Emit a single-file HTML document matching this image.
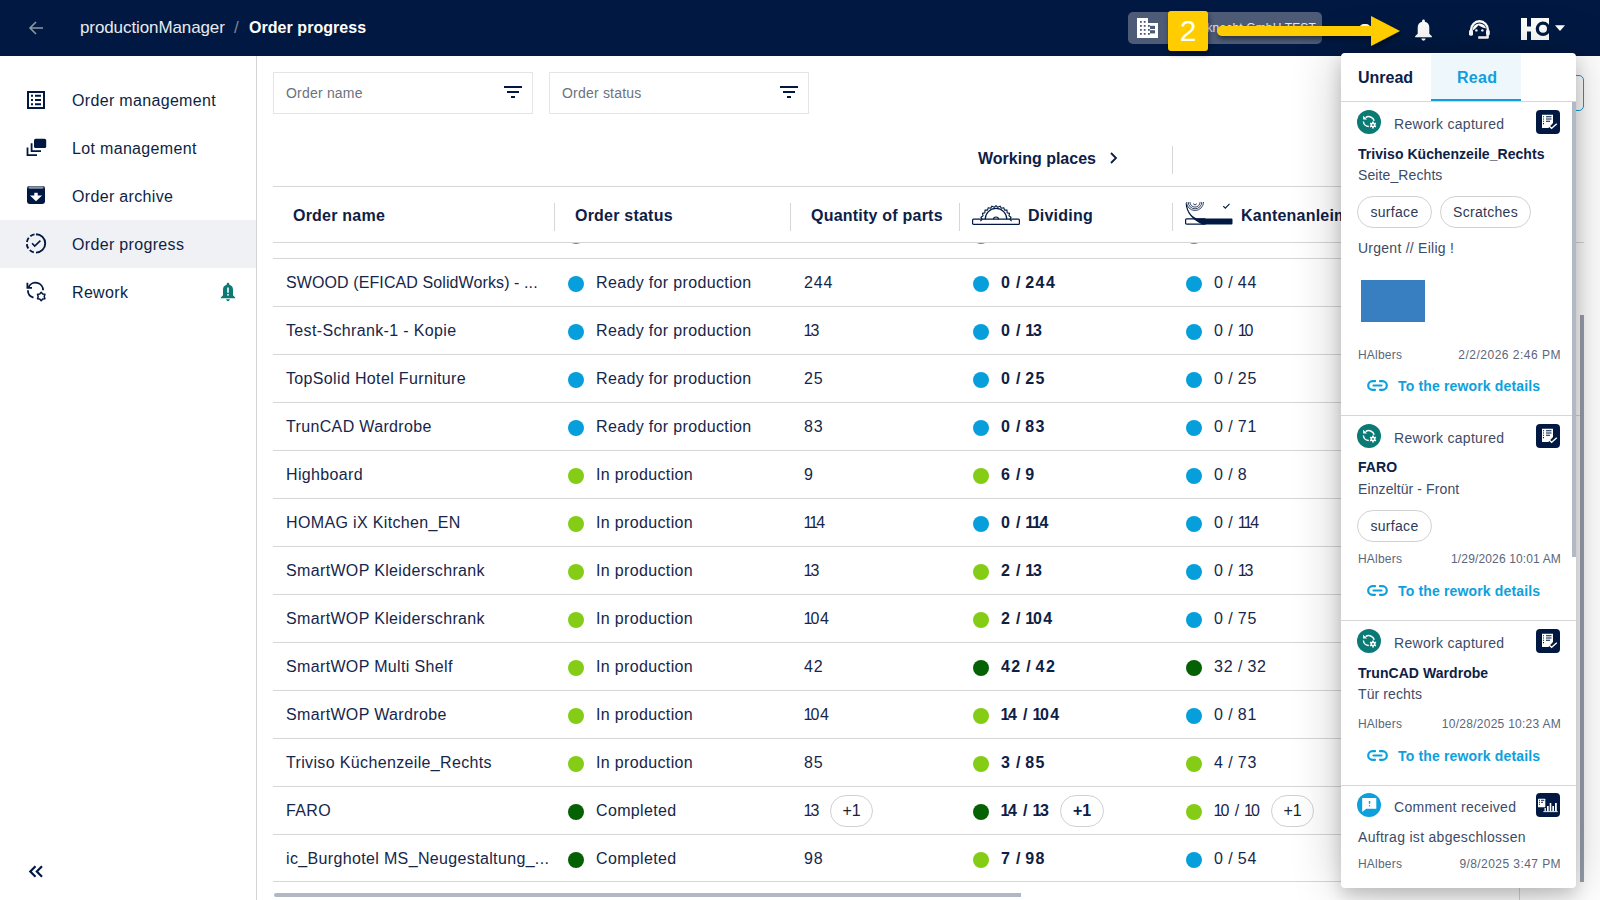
<!DOCTYPE html>
<html><head><meta charset="utf-8"><style>
*{box-sizing:border-box;margin:0;padding:0}
html,body{width:1600px;height:900px;overflow:hidden;background:#fff;font-family:"Liberation Sans",sans-serif;color:#0d1f3f}
.a{position:absolute}
#hdr{position:absolute;left:0;top:0;width:1600px;height:56px;background:#011942}
#side{position:absolute;left:0;top:56px;width:257px;height:844px;background:#fff;border-right:1px solid #d4d4d4}
.nav{position:absolute;left:0;width:256px;height:48px}
.nav svg{position:absolute;left:27px;top:15px}
.nav .tx{position:absolute;left:72px;top:1px;line-height:48px;font-size:16px;letter-spacing:0.33px;color:#0d1f44}
.nav.act{background:#f0f1f4}
.flt{position:absolute;top:72px;width:260px;height:42px;border:1px solid #e3e5e9;background:#fff}
.flt .ph{position:absolute;left:12px;top:0;line-height:41px;font-size:14px;color:#6b7280;letter-spacing:0.2px}
.flt svg{position:absolute;left:229px;top:13px}
.vs{position:absolute;width:1px;background:#d6d6d6}
.hl{position:absolute;height:1px;background:#d6d6d6}
.th{position:absolute;top:204px;font-size:16px;font-weight:bold;color:#0d2046;line-height:24px;letter-spacing:0.22px}
.cell{position:absolute;font-size:16px;color:#16264a;line-height:20px;letter-spacing:0.35px;white-space:nowrap}
.b{font-weight:bold;color:#0d2046;letter-spacing:0.2px}
.dot{position:absolute;width:16px;height:16px;border-radius:50%}
.chip{position:absolute;height:32px;border:1px solid #cfd1d5;border-radius:16px;font-size:16px;line-height:30px;text-align:center;color:#1b2435;background:#fff}
</style></head><body>
<div id="hdr">
  <svg class="a" style="left:28px;top:20px" width="16" height="16" viewBox="0 0 16 16"><path d="M15 8H2M8 2L2 8l6 6" fill="none" stroke="#8f96a3" stroke-width="1.6"/></svg>
  <div class="a" style="left:80px;top:18px;font-size:17px;letter-spacing:-0.1px;color:#e8eaee;line-height:20px">productionManager</div>
  <div class="a" style="left:234px;top:18px;font-size:17px;color:#7d8595;line-height:20px">/</div>
  <div class="a" style="left:249px;top:18px;font-size:16px;font-weight:bold;color:#fff;line-height:20px;letter-spacing:0.05px">Order progress</div>
<div class="a" style="left:1128px;top:12px;width:194px;height:32px;border-radius:5px;background:#4d5b77"></div>
<svg class="a" style="left:1137px;top:18px" width="21" height="20" viewBox="0 0 21 20"><path d="M0 0h11v5h10v15H0z" fill="#fff"/><g fill="#4d5b77"><rect x="3" y="3" width="1.8" height="1.8"/><rect x="6.8" y="3" width="1.8" height="1.8"/><rect x="3" y="7" width="1.8" height="1.8"/><rect x="6.8" y="7" width="1.8" height="1.8"/><rect x="3" y="11" width="1.8" height="1.8"/><rect x="6.8" y="11" width="1.8" height="1.8"/><rect x="3" y="15" width="1.8" height="1.8"/><rect x="6.8" y="15" width="1.8" height="1.8"/><rect x="11" y="7" width="1.8" height="1.8"/><rect x="11" y="11" width="1.8" height="1.8"/><rect x="11" y="15" width="1.8" height="1.8"/><rect x="13" y="7.8" width="5" height="3.2"/><rect x="13" y="12.2" width="5" height="3.2"/></g></svg>
<div class="a" style="left:1165px;top:19px;width:151px;height:18px;overflow:hidden"><div class="a" style="right:0;top:0;white-space:nowrap;font-size:12px;color:#e3e7ee;line-height:18px;letter-spacing:0.15px">Weinknecht GmbH TEST</div></div>
<div class="a" style="left:1359px;top:24px;width:12px;height:10px;border-radius:5px 5px 2px 2px;background:#fff"></div>
<svg class="a" style="left:1414px;top:19px" width="19" height="22" viewBox="0 0 19 22"><path d="M9.5 0.5a1.4 1.4 0 0 1 1.4 1.4v0.8A6 6 0 0 1 15.3 8.5v6.2l2.6 2.6v1H1.1v-1l2.6-2.6V8.5A6 6 0 0 1 8.1 2.7v-0.8A1.4 1.4 0 0 1 9.5 0.5z" fill="#fff"/><path d="M7.4 19.6h4.2a2.1 2.1 0 0 1-4.2 0z" fill="#fff"/></svg>
<svg class="a" style="left:1468px;top:19px" width="23" height="21" viewBox="0 0 23 21"><path d="M3.2 12V10.6A8.3 8.3 0 0 1 19.8 10.6V12" fill="none" stroke="#fff" stroke-width="2.4"/><rect x="1" y="11" width="4" height="5.7" rx="1.4" fill="#fff"/><rect x="18" y="11" width="3.8" height="5.5" rx="1.4" fill="#fff"/><path d="M4.4 12A7.1 7.1 0 0 1 18.6 11L18.2 9.4C15.5 9 12.6 7.9 10.4 6.3C8.8 8.4 6.8 10.4 4.6 11.5z" fill="#fff"/><circle cx="8.4" cy="11.4" r="1.2" fill="#fff"/><circle cx="14.4" cy="11.4" r="1.2" fill="#fff"/><path d="M19.6 16v2.4H10.2" fill="none" stroke="#fff" stroke-width="2.5" stroke-linejoin="round"/></svg>
<svg class="a" style="left:1521px;top:18px" width="45" height="23" viewBox="0 0 45 23"><path d="M0 0h6v8.5h4V0h18v22H10v-8.5H6V22H0z" fill="#fff"/><circle cx="22" cy="10.8" r="7.3" fill="#011942"/><circle cx="22" cy="10.8" r="4" fill="#fff"/><path d="M34 7.3h10l-5 5.7z" fill="#fff"/></svg>
</div>
<div id="side">
  <div class="nav" style="top:20px"><div class="tx">Order management</div></div>
  <div class="nav" style="top:68px"><div class="tx">Lot management</div></div>
  <div class="nav" style="top:116px"><div class="tx">Order archive</div></div>
  <div class="nav act" style="top:164px"><div class="tx">Order progress</div></div>
  <div class="nav" style="top:212px"><div class="tx">Rework</div></div>
</div>
<svg class="a" style="left:27px;top:91px" width="18" height="18" viewBox="0 0 18 18"><rect x="1" y="1" width="16" height="16" fill="none" stroke="#011942" stroke-width="2"/><path d="M4 4.8h2M8 4.8h6M4 9h2M8 9h6M4 13.2h2M8 13.2h6" stroke="#011942" stroke-width="2"/></svg>
<svg class="a" style="left:26px;top:138px" width="21" height="19" viewBox="0 0 21 19"><rect x="8" y="0.8" width="12.2" height="9.2" rx="1.6" fill="#011942"/><path d="M5.6 5.2V13.1H15" fill="none" stroke="#011942" stroke-width="1.8"/><path d="M1.5 9.6V17.1H11" fill="none" stroke="#011942" stroke-width="1.8"/></svg>
<svg class="a" style="left:27px;top:186px" width="18" height="18" viewBox="0 0 18 18"><rect x="0" y="0" width="18" height="18" rx="2.4" fill="#011942"/><rect x="1.5" y="0.3" width="15" height="2.4" rx="1" fill="#8d94a2"/><rect x="7.3" y="6.8" width="3.4" height="3.2" fill="#fff"/><path d="M3 9.4h12L9 15.2z" fill="#fff"/></svg>
<svg class="a" style="left:26px;top:233px" width="21" height="21" viewBox="0 0 21 21"><path d="M10 1.2A9.2 9.2 0 0 1 10 19.6" fill="none" stroke="#011942" stroke-width="1.9"/><path d="M10 19.6A9.2 9.2 0 0 1 10 1.2" fill="none" stroke="#011942" stroke-width="1.9" stroke-dasharray="4.6 2.2" stroke-dashoffset="4.6"/><path d="M6.1 10.2L8.7 13.1 14.4 7.6" fill="none" stroke="#011942" stroke-width="1.6"/></svg>
<svg class="a" style="left:26px;top:281px" width="21" height="21" viewBox="0 0 21 21"><path d="M2.6 6.1A7.6 7.6 0 0 1 17.1 9.3" fill="none" stroke="#011942" stroke-width="1.8"/><path d="M1.9 9.3A7.6 7.6 0 0 0 7.5 16.6" fill="none" stroke="#011942" stroke-width="1.8"/><path d="M1.4 1.8V6.8H6" fill="none" stroke="#011942" stroke-width="1.8"/><path d="M15.20 11.20 L16.70 12.90 L18.92 13.35 L18.20 15.50 L18.92 17.65 L16.70 18.10 L15.20 19.80 L13.70 18.10 L11.48 17.65 L12.20 15.50 L11.48 13.35 L13.70 12.90z" fill="none" stroke="#011942" stroke-width="1.5" stroke-linejoin="round"/></svg>
<svg class="a" style="left:220px;top:282px" width="16" height="19" viewBox="0 0 16 19"><path d="M8 0.8a1.3 1.3 0 0 1 1.3 1.3v0.6A5.2 5.2 0 0 1 13 7.8v5.4l2.2 2.2v0.9H0.8v-0.9L3 13.2V7.8a5.2 5.2 0 0 1 3.7-5.1V2.1A1.3 1.3 0 0 1 8 0.8z" fill="#0b7a75"/><path d="M6.2 17.3h3.6a1.8 1.8 0 0 1-3.6 0z" fill="#0b7a75"/><rect x="7.2" y="5.5" width="1.6" height="5.3" fill="#fff"/><rect x="7.2" y="12" width="1.6" height="1.6" fill="#fff"/></svg>
<svg class="a" style="left:28px;top:865px" width="16" height="13" viewBox="0 0 16 13"><path d="M7.5 1.2L2.3 6.5l5.2 5.3M14 1.2L8.8 6.5l5.2 5.3" fill="none" stroke="#011942" stroke-width="2.2"/></svg>
<div id="main">
<div class="dot" style="left:568px;top:228px;background:#069fdb"></div>
<div class="cell" style="left:596px;top:225px">Ready for production</div>
<div class="dot" style="left:973px;top:228px;background:#069fdb"></div>
<div class="dot" style="left:1186px;top:228px;background:#069fdb"></div>
<div class="hl" style="left:273px;top:258px;width:1303px"></div>
<div class="cell" style="left:286px;top:273px;letter-spacing:0.1px">SWOOD (EFICAD SolidWorks) - ...</div>
<div class="dot" style="left:568px;top:276px;background:#069fdb"></div>
<div class="cell" style="left:596px;top:273px">Ready for production</div>
<div class="cell" style="left:804px;top:273px"><span style="letter-spacing:0.8px">2</span><span style="letter-spacing:0.8px">4</span><span style="letter-spacing:0.8px">4</span></div>
<div class="dot" style="left:973px;top:276px;background:#069fdb"></div>
<div class="cell b" style="left:1001px;top:273px"><span style="letter-spacing:1.4px">0</span><span style="letter-spacing:0.2px"> </span><span style="letter-spacing:0.2px">/</span><span style="letter-spacing:0.2px"> </span><span style="letter-spacing:1.4px">2</span><span style="letter-spacing:1.4px">4</span><span style="letter-spacing:1.4px">4</span></div>
<div class="dot" style="left:1186px;top:276px;background:#069fdb"></div>
<div class="cell" style="left:1214px;top:273px"><span style="letter-spacing:0.8px">0</span><span style="letter-spacing:0.2px"> </span><span style="letter-spacing:0.2px">/</span><span style="letter-spacing:0.2px"> </span><span style="letter-spacing:0.8px">4</span><span style="letter-spacing:0.8px">4</span></div>
<div class="hl" style="left:273px;top:306px;width:1303px"></div>
<div class="cell" style="left:286px;top:321px;letter-spacing:0.35px">Test-Schrank-1 - Kopie</div>
<div class="dot" style="left:568px;top:324px;background:#069fdb"></div>
<div class="cell" style="left:596px;top:321px">Ready for production</div>
<div class="cell" style="left:804px;top:321px"><span style="letter-spacing:-2.0px;margin-left:-0.5px">1</span><span style="letter-spacing:0.8px">3</span></div>
<div class="dot" style="left:973px;top:324px;background:#069fdb"></div>
<div class="cell b" style="left:1001px;top:321px"><span style="letter-spacing:1.4px">0</span><span style="letter-spacing:0.2px"> </span><span style="letter-spacing:0.2px">/</span><span style="letter-spacing:0.2px"> </span><span style="letter-spacing:-1.3px">1</span><span style="letter-spacing:1.4px">3</span></div>
<div class="dot" style="left:1186px;top:324px;background:#069fdb"></div>
<div class="cell" style="left:1214px;top:321px"><span style="letter-spacing:0.8px">0</span><span style="letter-spacing:0.2px"> </span><span style="letter-spacing:0.2px">/</span><span style="letter-spacing:0.2px"> </span><span style="letter-spacing:-2.0px">1</span><span style="letter-spacing:0.8px">0</span></div>
<div class="hl" style="left:273px;top:354px;width:1303px"></div>
<div class="cell" style="left:286px;top:369px;letter-spacing:0.35px">TopSolid Hotel Furniture</div>
<div class="dot" style="left:568px;top:372px;background:#069fdb"></div>
<div class="cell" style="left:596px;top:369px">Ready for production</div>
<div class="cell" style="left:804px;top:369px"><span style="letter-spacing:0.8px">2</span><span style="letter-spacing:0.8px">5</span></div>
<div class="dot" style="left:973px;top:372px;background:#069fdb"></div>
<div class="cell b" style="left:1001px;top:369px"><span style="letter-spacing:1.4px">0</span><span style="letter-spacing:0.2px"> </span><span style="letter-spacing:0.2px">/</span><span style="letter-spacing:0.2px"> </span><span style="letter-spacing:1.4px">2</span><span style="letter-spacing:1.4px">5</span></div>
<div class="dot" style="left:1186px;top:372px;background:#069fdb"></div>
<div class="cell" style="left:1214px;top:369px"><span style="letter-spacing:0.8px">0</span><span style="letter-spacing:0.2px"> </span><span style="letter-spacing:0.2px">/</span><span style="letter-spacing:0.2px"> </span><span style="letter-spacing:0.8px">2</span><span style="letter-spacing:0.8px">5</span></div>
<div class="hl" style="left:273px;top:402px;width:1303px"></div>
<div class="cell" style="left:286px;top:417px;letter-spacing:0.35px">TrunCAD Wardrobe</div>
<div class="dot" style="left:568px;top:420px;background:#069fdb"></div>
<div class="cell" style="left:596px;top:417px">Ready for production</div>
<div class="cell" style="left:804px;top:417px"><span style="letter-spacing:0.8px">8</span><span style="letter-spacing:0.8px">3</span></div>
<div class="dot" style="left:973px;top:420px;background:#069fdb"></div>
<div class="cell b" style="left:1001px;top:417px"><span style="letter-spacing:1.4px">0</span><span style="letter-spacing:0.2px"> </span><span style="letter-spacing:0.2px">/</span><span style="letter-spacing:0.2px"> </span><span style="letter-spacing:1.4px">8</span><span style="letter-spacing:1.4px">3</span></div>
<div class="dot" style="left:1186px;top:420px;background:#069fdb"></div>
<div class="cell" style="left:1214px;top:417px"><span style="letter-spacing:0.8px">0</span><span style="letter-spacing:0.2px"> </span><span style="letter-spacing:0.2px">/</span><span style="letter-spacing:0.2px"> </span><span style="letter-spacing:0.8px">7</span><span style="letter-spacing:-2.0px">1</span></div>
<div class="hl" style="left:273px;top:450px;width:1303px"></div>
<div class="cell" style="left:286px;top:465px;letter-spacing:0.35px">Highboard</div>
<div class="dot" style="left:568px;top:468px;background:#84cc16"></div>
<div class="cell" style="left:596px;top:465px">In production</div>
<div class="cell" style="left:804px;top:465px"><span style="letter-spacing:0.8px">9</span></div>
<div class="dot" style="left:973px;top:468px;background:#84cc16"></div>
<div class="cell b" style="left:1001px;top:465px"><span style="letter-spacing:1.4px">6</span><span style="letter-spacing:0.2px"> </span><span style="letter-spacing:0.2px">/</span><span style="letter-spacing:0.2px"> </span><span style="letter-spacing:1.4px">9</span></div>
<div class="dot" style="left:1186px;top:468px;background:#069fdb"></div>
<div class="cell" style="left:1214px;top:465px"><span style="letter-spacing:0.8px">0</span><span style="letter-spacing:0.2px"> </span><span style="letter-spacing:0.2px">/</span><span style="letter-spacing:0.2px"> </span><span style="letter-spacing:0.8px">8</span></div>
<div class="hl" style="left:273px;top:498px;width:1303px"></div>
<div class="cell" style="left:286px;top:513px;letter-spacing:0.35px">HOMAG iX Kitchen_EN</div>
<div class="dot" style="left:568px;top:516px;background:#84cc16"></div>
<div class="cell" style="left:596px;top:513px">In production</div>
<div class="cell" style="left:804px;top:513px"><span style="letter-spacing:-2.0px;margin-left:-0.5px">1</span><span style="letter-spacing:-2.0px">1</span><span style="letter-spacing:0.8px">4</span></div>
<div class="dot" style="left:973px;top:516px;background:#069fdb"></div>
<div class="cell b" style="left:1001px;top:513px"><span style="letter-spacing:1.4px">0</span><span style="letter-spacing:0.2px"> </span><span style="letter-spacing:0.2px">/</span><span style="letter-spacing:0.2px"> </span><span style="letter-spacing:-1.3px">1</span><span style="letter-spacing:-1.3px">1</span><span style="letter-spacing:1.4px">4</span></div>
<div class="dot" style="left:1186px;top:516px;background:#069fdb"></div>
<div class="cell" style="left:1214px;top:513px"><span style="letter-spacing:0.8px">0</span><span style="letter-spacing:0.2px"> </span><span style="letter-spacing:0.2px">/</span><span style="letter-spacing:0.2px"> </span><span style="letter-spacing:-2.0px">1</span><span style="letter-spacing:-2.0px">1</span><span style="letter-spacing:0.8px">4</span></div>
<div class="hl" style="left:273px;top:546px;width:1303px"></div>
<div class="cell" style="left:286px;top:561px;letter-spacing:0.35px">SmartWOP Kleiderschrank</div>
<div class="dot" style="left:568px;top:564px;background:#84cc16"></div>
<div class="cell" style="left:596px;top:561px">In production</div>
<div class="cell" style="left:804px;top:561px"><span style="letter-spacing:-2.0px;margin-left:-0.5px">1</span><span style="letter-spacing:0.8px">3</span></div>
<div class="dot" style="left:973px;top:564px;background:#84cc16"></div>
<div class="cell b" style="left:1001px;top:561px"><span style="letter-spacing:1.4px">2</span><span style="letter-spacing:0.2px"> </span><span style="letter-spacing:0.2px">/</span><span style="letter-spacing:0.2px"> </span><span style="letter-spacing:-1.3px">1</span><span style="letter-spacing:1.4px">3</span></div>
<div class="dot" style="left:1186px;top:564px;background:#069fdb"></div>
<div class="cell" style="left:1214px;top:561px"><span style="letter-spacing:0.8px">0</span><span style="letter-spacing:0.2px"> </span><span style="letter-spacing:0.2px">/</span><span style="letter-spacing:0.2px"> </span><span style="letter-spacing:-2.0px">1</span><span style="letter-spacing:0.8px">3</span></div>
<div class="hl" style="left:273px;top:594px;width:1303px"></div>
<div class="cell" style="left:286px;top:609px;letter-spacing:0.35px">SmartWOP Kleiderschrank</div>
<div class="dot" style="left:568px;top:612px;background:#84cc16"></div>
<div class="cell" style="left:596px;top:609px">In production</div>
<div class="cell" style="left:804px;top:609px"><span style="letter-spacing:-2.0px;margin-left:-0.5px">1</span><span style="letter-spacing:0.8px">0</span><span style="letter-spacing:0.8px">4</span></div>
<div class="dot" style="left:973px;top:612px;background:#84cc16"></div>
<div class="cell b" style="left:1001px;top:609px"><span style="letter-spacing:1.4px">2</span><span style="letter-spacing:0.2px"> </span><span style="letter-spacing:0.2px">/</span><span style="letter-spacing:0.2px"> </span><span style="letter-spacing:-1.3px">1</span><span style="letter-spacing:1.4px">0</span><span style="letter-spacing:1.4px">4</span></div>
<div class="dot" style="left:1186px;top:612px;background:#069fdb"></div>
<div class="cell" style="left:1214px;top:609px"><span style="letter-spacing:0.8px">0</span><span style="letter-spacing:0.2px"> </span><span style="letter-spacing:0.2px">/</span><span style="letter-spacing:0.2px"> </span><span style="letter-spacing:0.8px">7</span><span style="letter-spacing:0.8px">5</span></div>
<div class="hl" style="left:273px;top:642px;width:1303px"></div>
<div class="cell" style="left:286px;top:657px;letter-spacing:0.35px">SmartWOP Multi Shelf</div>
<div class="dot" style="left:568px;top:660px;background:#84cc16"></div>
<div class="cell" style="left:596px;top:657px">In production</div>
<div class="cell" style="left:804px;top:657px"><span style="letter-spacing:0.8px">4</span><span style="letter-spacing:0.8px">2</span></div>
<div class="dot" style="left:973px;top:660px;background:#046104"></div>
<div class="cell b" style="left:1001px;top:657px"><span style="letter-spacing:1.4px">4</span><span style="letter-spacing:1.4px">2</span><span style="letter-spacing:0.2px"> </span><span style="letter-spacing:0.2px">/</span><span style="letter-spacing:0.2px"> </span><span style="letter-spacing:1.4px">4</span><span style="letter-spacing:1.4px">2</span></div>
<div class="dot" style="left:1186px;top:660px;background:#046104"></div>
<div class="cell" style="left:1214px;top:657px"><span style="letter-spacing:0.8px">3</span><span style="letter-spacing:0.8px">2</span><span style="letter-spacing:0.2px"> </span><span style="letter-spacing:0.2px">/</span><span style="letter-spacing:0.2px"> </span><span style="letter-spacing:0.8px">3</span><span style="letter-spacing:0.8px">2</span></div>
<div class="hl" style="left:273px;top:690px;width:1303px"></div>
<div class="cell" style="left:286px;top:705px;letter-spacing:0.35px">SmartWOP Wardrobe</div>
<div class="dot" style="left:568px;top:708px;background:#84cc16"></div>
<div class="cell" style="left:596px;top:705px">In production</div>
<div class="cell" style="left:804px;top:705px"><span style="letter-spacing:-2.0px;margin-left:-0.5px">1</span><span style="letter-spacing:0.8px">0</span><span style="letter-spacing:0.8px">4</span></div>
<div class="dot" style="left:973px;top:708px;background:#84cc16"></div>
<div class="cell b" style="left:1001px;top:705px"><span style="letter-spacing:-1.3px;margin-left:-0.5px">1</span><span style="letter-spacing:1.4px">4</span><span style="letter-spacing:0.2px"> </span><span style="letter-spacing:0.2px">/</span><span style="letter-spacing:0.2px"> </span><span style="letter-spacing:-1.3px">1</span><span style="letter-spacing:1.4px">0</span><span style="letter-spacing:1.4px">4</span></div>
<div class="dot" style="left:1186px;top:708px;background:#069fdb"></div>
<div class="cell" style="left:1214px;top:705px"><span style="letter-spacing:0.8px">0</span><span style="letter-spacing:0.2px"> </span><span style="letter-spacing:0.2px">/</span><span style="letter-spacing:0.2px"> </span><span style="letter-spacing:0.8px">8</span><span style="letter-spacing:-2.0px">1</span></div>
<div class="hl" style="left:273px;top:738px;width:1303px"></div>
<div class="cell" style="left:286px;top:753px;letter-spacing:0.35px">Triviso Küchenzeile_Rechts</div>
<div class="dot" style="left:568px;top:756px;background:#84cc16"></div>
<div class="cell" style="left:596px;top:753px">In production</div>
<div class="cell" style="left:804px;top:753px"><span style="letter-spacing:0.8px">8</span><span style="letter-spacing:0.8px">5</span></div>
<div class="dot" style="left:973px;top:756px;background:#84cc16"></div>
<div class="cell b" style="left:1001px;top:753px"><span style="letter-spacing:1.4px">3</span><span style="letter-spacing:0.2px"> </span><span style="letter-spacing:0.2px">/</span><span style="letter-spacing:0.2px"> </span><span style="letter-spacing:1.4px">8</span><span style="letter-spacing:1.4px">5</span></div>
<div class="dot" style="left:1186px;top:756px;background:#84cc16"></div>
<div class="cell" style="left:1214px;top:753px"><span style="letter-spacing:0.8px">4</span><span style="letter-spacing:0.2px"> </span><span style="letter-spacing:0.2px">/</span><span style="letter-spacing:0.2px"> </span><span style="letter-spacing:0.8px">7</span><span style="letter-spacing:0.8px">3</span></div>
<div class="hl" style="left:273px;top:786px;width:1303px"></div>
<div class="cell" style="left:286px;top:801px;letter-spacing:0.35px">FARO</div>
<div class="dot" style="left:568px;top:804px;background:#046104"></div>
<div class="cell" style="left:596px;top:801px">Completed</div>
<div class="cell" style="left:804px;top:801px"><span style="letter-spacing:-2.0px;margin-left:-0.5px">1</span><span style="letter-spacing:0.8px">3</span></div>
<div class="dot" style="left:973px;top:804px;background:#046104"></div>
<div class="cell b" style="left:1001px;top:801px"><span style="letter-spacing:-1.3px;margin-left:-0.5px">1</span><span style="letter-spacing:1.4px">4</span><span style="letter-spacing:0.2px"> </span><span style="letter-spacing:0.2px">/</span><span style="letter-spacing:0.2px"> </span><span style="letter-spacing:-1.3px">1</span><span style="letter-spacing:1.4px">3</span></div>
<div class="dot" style="left:1186px;top:804px;background:#84cc16"></div>
<div class="cell" style="left:1214px;top:801px"><span style="letter-spacing:-2.0px;margin-left:-0.5px">1</span><span style="letter-spacing:0.8px">0</span><span style="letter-spacing:0.2px"> </span><span style="letter-spacing:0.2px">/</span><span style="letter-spacing:0.2px"> </span><span style="letter-spacing:-2.0px">1</span><span style="letter-spacing:0.8px">0</span></div>
<div class="chip" style="left:830px;top:795px;width:43px">+1</div>
<div class="chip" style="left:1060px;top:795px;width:44px;font-weight:bold;color:#0d2046">+1</div>
<div class="chip" style="left:1271px;top:795px;width:43px">+1</div>
<div class="hl" style="left:273px;top:834px;width:1303px"></div>
<div class="cell" style="left:286px;top:849px;letter-spacing:0.35px">ic_Burghotel MS_Neugestaltung_...</div>
<div class="dot" style="left:568px;top:852px;background:#046104"></div>
<div class="cell" style="left:596px;top:849px">Completed</div>
<div class="cell" style="left:804px;top:849px"><span style="letter-spacing:0.8px">9</span><span style="letter-spacing:0.8px">8</span></div>
<div class="dot" style="left:973px;top:852px;background:#84cc16"></div>
<div class="cell b" style="left:1001px;top:849px"><span style="letter-spacing:1.4px">7</span><span style="letter-spacing:0.2px"> </span><span style="letter-spacing:0.2px">/</span><span style="letter-spacing:0.2px"> </span><span style="letter-spacing:1.4px">9</span><span style="letter-spacing:1.4px">8</span></div>
<div class="dot" style="left:1186px;top:852px;background:#069fdb"></div>
<div class="cell" style="left:1214px;top:849px"><span style="letter-spacing:0.8px">0</span><span style="letter-spacing:0.2px"> </span><span style="letter-spacing:0.2px">/</span><span style="letter-spacing:0.2px"> </span><span style="letter-spacing:0.8px">5</span><span style="letter-spacing:0.8px">4</span></div>
<div class="hl" style="left:273px;top:881px;width:1303px"></div>
  <div class="a" style="left:273px;top:57px;width:1070px;height:185px;background:#fff"></div>
  <div class="flt" style="left:273px"><div class="ph">Order name</div><svg width="20" height="14" viewBox="0 0 20 14"><path d="M1 1h18M4 6h12M8 11h4" stroke="#011942" stroke-width="2"/></svg></div>
  <div class="flt" style="left:549px"><div class="ph">Order status</div><svg width="20" height="14" viewBox="0 0 20 14"><path d="M1 1h18M4 6h12M8 11h4" stroke="#011942" stroke-width="2"/></svg></div>
  <div class="a" style="left:978px;top:149px;font-size:16px;font-weight:bold;color:#0d2046;line-height:20px">Working places</div>
  <svg class="a" style="left:1109px;top:152px" width="10" height="12" viewBox="0 0 10 12"><path d="M2 1l5 5-5 5" fill="none" stroke="#0b1d3f" stroke-width="1.8"/></svg>
  <div class="vs" style="left:1172px;top:146px;height:28px"></div>
  <div class="hl" style="left:273px;top:186px;width:1303px"></div>
  <div class="hl" style="left:273px;top:242px;width:1311px"></div>
  <div class="th" style="left:293px">Order name</div>
  <div class="vs" style="left:554px;top:203px;height:28px"></div>
  <div class="th" style="left:575px">Order status</div>
  <div class="vs" style="left:790px;top:203px;height:28px"></div>
  <div class="th" style="left:811px">Quantity of parts</div>
  <div class="vs" style="left:959px;top:203px;height:28px"></div>
  <div class="th" style="left:1028px">Dividing</div>
<svg class="a" style="left:972px;top:204px" width="48" height="21" viewBox="0 0 48 21"><rect x="0.6" y="15.2" width="46.8" height="5.2" rx="1" fill="#fff" stroke="#011942" stroke-width="1.2"/><path d="M8.40 17.20 L10.12 15.37 L8.93 13.16 L11.07 11.84 L10.49 9.40 L12.89 8.68 L12.97 6.17 L15.48 6.09 L16.20 3.69 L18.64 4.27 L19.96 2.13 L22.17 3.32 L24.00 1.60 L25.83 3.32 L28.04 2.13 L29.36 4.27 L31.80 3.69 L32.52 6.09 L35.03 6.17 L35.11 8.68 L37.51 9.40 L36.93 11.84 L39.07 13.16 L37.88 15.37 L39.60 17.20" fill="none" stroke="#011942" stroke-width="1.1" stroke-linejoin="round"/><path d="M13.2 15.2A10.8 10.8 0 0 1 34.8 15.2" fill="none" stroke="#011942" stroke-width="1.2"/><path d="M21.5 15.2a2.5 2.2 0 0 1 5 0" fill="none" stroke="#011942" stroke-width="1.1"/></svg>
<svg class="a" style="left:1185px;top:202px" width="49" height="23" viewBox="0 0 49 23"><rect x="0.6" y="16.8" width="20" height="5.4" rx="1" fill="none" stroke="#011942" stroke-width="1.2"/><path d="M0.6 1C1 11 8 18.5 17.5 22.4H46.5a1 1 0 0 0 1-1V17.6a1 1 0 0 0-1-1H12C6 14 2.6 9 2.2 3z" fill="#011942"/><g fill="none" stroke="#011942" stroke-width="0.8"><path d="M1.5 0a8.5 8.5 0 0 0 17 0"/><path d="M3.2 0a6.8 6.8 0 0 0 13.6 0"/><path d="M4.9 0a5.1 5.1 0 0 0 10.2 0"/><path d="M8.5 1.5a1.5 1.3 0 0 0 3 0"/></g><path d="M38.3 4.2l2 2 4.2-4.4" fill="none" stroke="#011942" stroke-width="1.1"/></svg>
  <div class="vs" style="left:1172px;top:203px;height:28px"></div>
  <div class="th" style="left:1241px">Kantenanleimen</div>
  <div class="a" style="left:274px;top:893px;width:747px;height:4px;border-radius:3px 0 0 3px;background:#b1b8c5"></div>
</div>
<div class="a" style="left:1500px;top:75px;width:84px;height:36px;border:1.5px solid #0ea0dc;border-radius:5px"></div>
<div class="a" style="left:1519px;top:870px;width:1px;height:30px;background:#d6d6d6"></div>
<div class="hl" style="left:1576px;top:415px;width:8px"></div>
<div class="a" style="left:1580px;top:315px;width:4px;height:567px;background:#9aa1ae"></div>
<div id="pop" class="a" style="left:1341px;top:53px;width:235px;height:835px;background:#fff;border-radius:4px;box-shadow:0 8px 16px rgba(0,0,0,0.16),0 0 50px rgba(0,0,0,0.24);overflow:hidden">
<div class="a" style="left:90px;top:1px;width:90px;height:47px;background:#eef7fc"></div>
<div class="a" style="left:90px;top:46px;width:90px;height:2px;background:#0ea0dc"></div>
<div class="a" style="left:0;top:48px;width:235px;height:1px;background:#d5d7db"></div>
<div class="a" style="left:17px;top:15px;font-size:16px;font-weight:bold;color:#0d2046;line-height:20px">Unread</div>
<div class="a" style="left:116px;top:15px;font-size:16px;font-weight:bold;color:#0ea0dc;line-height:20px;letter-spacing:0.3px">Read</div>
</div>
<div class="a" style="left:1357px;top:110px;width:24px;height:24px;border-radius:50%;background:#0b7a75"></div>
<svg class="a" style="left:1357px;top:110px" width="24" height="24" viewBox="0 0 24 24"><path d="M8.6 7.6A5.6 5.6 0 0 1 17.2 10.8" fill="none" stroke="#fff" stroke-width="1.5"/><path d="M6.1 5.8V9.4H10z" fill="#fff"/><path d="M6.4 11.5A5.6 5.6 0 0 0 11.8 16.6" fill="none" stroke="#fff" stroke-width="1.5"/><g transform="translate(16 15)"><circle r="2.4" fill="#fff"/><path d="M0-3.4V3.4M-2.9-1.7L2.9 1.7M-2.9 1.7L2.9-1.7" stroke="#fff" stroke-width="1.6"/><circle r="0.9" fill="#0b7a75"/></g></svg>
<div class="a" style="left:1394px;top:115px;font-size:14px;color:#3d4b67;line-height:18px;letter-spacing:0.3px">Rework captured</div>
<div class="a" style="left:1536px;top:110px;width:24px;height:24px;border-radius:4px;background:#011942"></div>
<svg class="a" style="left:1536px;top:110px" width="24" height="24" viewBox="0 0 24 24"><path d="M6 4.8h11v8.2l-4.6 5H6z" fill="#fff"/><path d="M7 6.8h1M10 6.8h5.5M7 9h1M10 9h5.5M7 11.3h1M10 11.3h4M7 13.6h1" stroke="#011942" stroke-width="1.1"/><path d="M13.2 16l2.4 2.3 5.2-4.6" fill="none" stroke="#fff" stroke-width="1.3"/></svg>
<div class="a" style="left:1358px;top:145px;font-size:14px;font-weight:bold;color:#0d2046;line-height:18px;letter-spacing:0.05px">Triviso Küchenzeile_Rechts</div>
<div class="a" style="left:1358px;top:166px;font-size:14px;color:#3d4b67;line-height:18px;letter-spacing:0.1px">Seite_Rechts</div>
<div class="a" style="left:1357px;top:196px;width:75px;height:32px;border:1px solid #d2d2d2;border-radius:16px;font-size:14px;color:#2d3a55;line-height:30px;text-align:center;letter-spacing:0.3px">surface</div>
<div class="a" style="left:1440px;top:196px;width:91px;height:32px;border:1px solid #d2d2d2;border-radius:16px;font-size:14px;color:#2d3a55;line-height:30px;text-align:center;letter-spacing:0.3px">Scratches</div>
<div class="a" style="left:1358px;top:239px;font-size:14px;color:#3d4b67;line-height:18px;letter-spacing:0.25px">Urgent // Eilig !</div>
<div class="a" style="left:1361px;top:280px;width:64px;height:42px;background:#377fc0"></div>
<div class="a" style="left:1358px;top:348px;font-size:12px;color:#5b667b;line-height:14px;letter-spacing:0.2px">HAlbers</div>
<div class="a" style="left:1361px;top:348px;width:200px;text-align:right;font-size:12px;color:#5b667b;line-height:14px;letter-spacing:0.5px;margin-right:0">2/2/2026 2:46 PM</div>
<svg class="a" style="left:1367px;top:380px" width="21" height="11" viewBox="0 0 21 11"><path d="M8 1.2H5.5a4.3 4.3 0 0 0 0 8.6H8M13 1.2h2.5a4.3 4.3 0 0 1 0 8.6H13M6.5 5.5h8" fill="none" stroke="#0ea0dc" stroke-width="2.2" stroke-linecap="round"/></svg>
<div class="a" style="left:1398px;top:377px;font-size:14px;font-weight:bold;color:#0ea0dc;line-height:18px;letter-spacing:0.15px">To the rework details</div>
<div class="a" style="left:1341px;top:415px;width:235px;height:1px;background:#d6d6d6"></div>
<div class="a" style="left:1357px;top:424px;width:24px;height:24px;border-radius:50%;background:#0b7a75"></div>
<svg class="a" style="left:1357px;top:424px" width="24" height="24" viewBox="0 0 24 24"><path d="M8.6 7.6A5.6 5.6 0 0 1 17.2 10.8" fill="none" stroke="#fff" stroke-width="1.5"/><path d="M6.1 5.8V9.4H10z" fill="#fff"/><path d="M6.4 11.5A5.6 5.6 0 0 0 11.8 16.6" fill="none" stroke="#fff" stroke-width="1.5"/><g transform="translate(16 15)"><circle r="2.4" fill="#fff"/><path d="M0-3.4V3.4M-2.9-1.7L2.9 1.7M-2.9 1.7L2.9-1.7" stroke="#fff" stroke-width="1.6"/><circle r="0.9" fill="#0b7a75"/></g></svg>
<div class="a" style="left:1394px;top:429px;font-size:14px;color:#3d4b67;line-height:18px;letter-spacing:0.3px">Rework captured</div>
<div class="a" style="left:1536px;top:424px;width:24px;height:24px;border-radius:4px;background:#011942"></div>
<svg class="a" style="left:1536px;top:424px" width="24" height="24" viewBox="0 0 24 24"><path d="M6 4.8h11v8.2l-4.6 5H6z" fill="#fff"/><path d="M7 6.8h1M10 6.8h5.5M7 9h1M10 9h5.5M7 11.3h1M10 11.3h4M7 13.6h1" stroke="#011942" stroke-width="1.1"/><path d="M13.2 16l2.4 2.3 5.2-4.6" fill="none" stroke="#fff" stroke-width="1.3"/></svg>
<div class="a" style="left:1358px;top:458px;font-size:14px;font-weight:bold;color:#0d2046;line-height:18px;letter-spacing:0.05px">FARO</div>
<div class="a" style="left:1358px;top:480px;font-size:14px;color:#3d4b67;line-height:18px;letter-spacing:0.1px">Einzeltür - Front</div>
<div class="a" style="left:1357px;top:510px;width:75px;height:32px;border:1px solid #d2d2d2;border-radius:16px;font-size:14px;color:#2d3a55;line-height:30px;text-align:center;letter-spacing:0.3px">surface</div>
<div class="a" style="left:1358px;top:552px;font-size:12px;color:#5b667b;line-height:14px;letter-spacing:0.2px">HAlbers</div>
<div class="a" style="left:1361px;top:552px;width:200px;text-align:right;font-size:12px;color:#5b667b;line-height:14px;letter-spacing:0.14px;margin-right:0">1/29/2026 10:01 AM</div>
<svg class="a" style="left:1367px;top:585px" width="21" height="11" viewBox="0 0 21 11"><path d="M8 1.2H5.5a4.3 4.3 0 0 0 0 8.6H8M13 1.2h2.5a4.3 4.3 0 0 1 0 8.6H13M6.5 5.5h8" fill="none" stroke="#0ea0dc" stroke-width="2.2" stroke-linecap="round"/></svg>
<div class="a" style="left:1398px;top:582px;font-size:14px;font-weight:bold;color:#0ea0dc;line-height:18px;letter-spacing:0.15px">To the rework details</div>
<div class="a" style="left:1341px;top:620px;width:235px;height:1px;background:#d6d6d6"></div>
<div class="a" style="left:1357px;top:629px;width:24px;height:24px;border-radius:50%;background:#0b7a75"></div>
<svg class="a" style="left:1357px;top:629px" width="24" height="24" viewBox="0 0 24 24"><path d="M8.6 7.6A5.6 5.6 0 0 1 17.2 10.8" fill="none" stroke="#fff" stroke-width="1.5"/><path d="M6.1 5.8V9.4H10z" fill="#fff"/><path d="M6.4 11.5A5.6 5.6 0 0 0 11.8 16.6" fill="none" stroke="#fff" stroke-width="1.5"/><g transform="translate(16 15)"><circle r="2.4" fill="#fff"/><path d="M0-3.4V3.4M-2.9-1.7L2.9 1.7M-2.9 1.7L2.9-1.7" stroke="#fff" stroke-width="1.6"/><circle r="0.9" fill="#0b7a75"/></g></svg>
<div class="a" style="left:1394px;top:634px;font-size:14px;color:#3d4b67;line-height:18px;letter-spacing:0.3px">Rework captured</div>
<div class="a" style="left:1536px;top:629px;width:24px;height:24px;border-radius:4px;background:#011942"></div>
<svg class="a" style="left:1536px;top:629px" width="24" height="24" viewBox="0 0 24 24"><path d="M6 4.8h11v8.2l-4.6 5H6z" fill="#fff"/><path d="M7 6.8h1M10 6.8h5.5M7 9h1M10 9h5.5M7 11.3h1M10 11.3h4M7 13.6h1" stroke="#011942" stroke-width="1.1"/><path d="M13.2 16l2.4 2.3 5.2-4.6" fill="none" stroke="#fff" stroke-width="1.3"/></svg>
<div class="a" style="left:1358px;top:664px;font-size:14px;font-weight:bold;color:#0d2046;line-height:18px;letter-spacing:0.05px">TrunCAD Wardrobe</div>
<div class="a" style="left:1358px;top:685px;font-size:14px;color:#3d4b67;line-height:18px;letter-spacing:0.1px">Tür rechts</div>
<div class="a" style="left:1358px;top:717px;font-size:12px;color:#5b667b;line-height:14px;letter-spacing:0.2px">HAlbers</div>
<div class="a" style="left:1361px;top:717px;width:200px;text-align:right;font-size:12px;color:#5b667b;line-height:14px;letter-spacing:0.27px;margin-right:0">10/28/2025 10:23 AM</div>
<svg class="a" style="left:1367px;top:750px" width="21" height="11" viewBox="0 0 21 11"><path d="M8 1.2H5.5a4.3 4.3 0 0 0 0 8.6H8M13 1.2h2.5a4.3 4.3 0 0 1 0 8.6H13M6.5 5.5h8" fill="none" stroke="#0ea0dc" stroke-width="2.2" stroke-linecap="round"/></svg>
<div class="a" style="left:1398px;top:747px;font-size:14px;font-weight:bold;color:#0ea0dc;line-height:18px;letter-spacing:0.15px">To the rework details</div>
<div class="a" style="left:1341px;top:785px;width:235px;height:1px;background:#d6d6d6"></div>
<div class="a" style="left:1357px;top:793px;width:24px;height:24px;border-radius:50%;background:#0ea0dc"></div>
<svg class="a" style="left:1357px;top:793px" width="24" height="24" viewBox="0 0 24 24"><path d="M5.2 5h14.1v10.7H9.2l-4 3.2z" fill="#fff"/><rect x="11.8" y="7.9" width="1.5" height="3" rx="0.7" fill="#0ea0dc"/><circle cx="12.55" cy="12.7" r="0.8" fill="#0ea0dc"/></svg>
<div class="a" style="left:1394px;top:798px;font-size:14px;color:#3d4b67;line-height:18px;letter-spacing:0.3px">Comment received</div>
<div class="a" style="left:1536px;top:793px;width:24px;height:24px;border-radius:4px;background:#011942"></div>
<svg class="a" style="left:1536px;top:793px" width="24" height="24" viewBox="0 0 24 24"><rect x="2" y="5.8" width="7.3" height="8.5" rx="0.5" fill="#fff"/><path d="M3 7.3h1M5 7.3h3.3M3 9.3h1M5 9.3h2M3 11.3h1" stroke="#011942" stroke-width="0.9"/><path d="M8.5 15h1.3v3.3H8.5zM11 13h1.7v5.3H11zM13.7 10h1.6v8.3h-1.6zM16.3 13H18v5.3h-1.7zM19 10h1.8v8.3H19z" fill="#fff"/><rect x="7.3" y="18.2" width="14.4" height="0.9" fill="#fff"/></svg>
<div class="a" style="left:1358px;top:828px;font-size:14px;color:#3d4b67;line-height:18px;letter-spacing:0.3px">Auftrag ist abgeschlossen</div>
<div class="a" style="left:1358px;top:857px;font-size:12px;color:#5b667b;line-height:14px;letter-spacing:0.2px">HAlbers</div>
<div class="a" style="left:1361px;top:857px;width:200px;text-align:right;font-size:12px;color:#5b667b;line-height:14px;letter-spacing:0.43px;margin-right:0">9/8/2025 3:47 PM</div>
<div class="a" style="left:1572px;top:102px;width:4px;height:455px;background:#b1b8c6"></div>
<div class="a" style="left:1168px;top:11px;width:40px;height:40px;border-radius:3px;background:#ffcc00;box-shadow:1px 3px 5px rgba(0,0,0,0.45);color:#fff;font-size:30px;line-height:40px;text-align:center">2</div>
<svg class="a" style="left:1210px;top:10px;overflow:visible" width="200" height="45" viewBox="0 0 200 45"><defs><filter id="sh" x="-10%" y="-30%" width="120%" height="180%"><feDropShadow dx="1" dy="3" stdDeviation="2.5" flood-color="#000" flood-opacity="0.45"/></filter></defs><g filter="url(#sh)"><path d="M12 16h152v10H12a5 5 0 0 1 0-10z" fill="#ffcc00"/><path d="M161 6l29 15-29 15z" fill="#ffcc00"/></g></svg>
</body></html>
